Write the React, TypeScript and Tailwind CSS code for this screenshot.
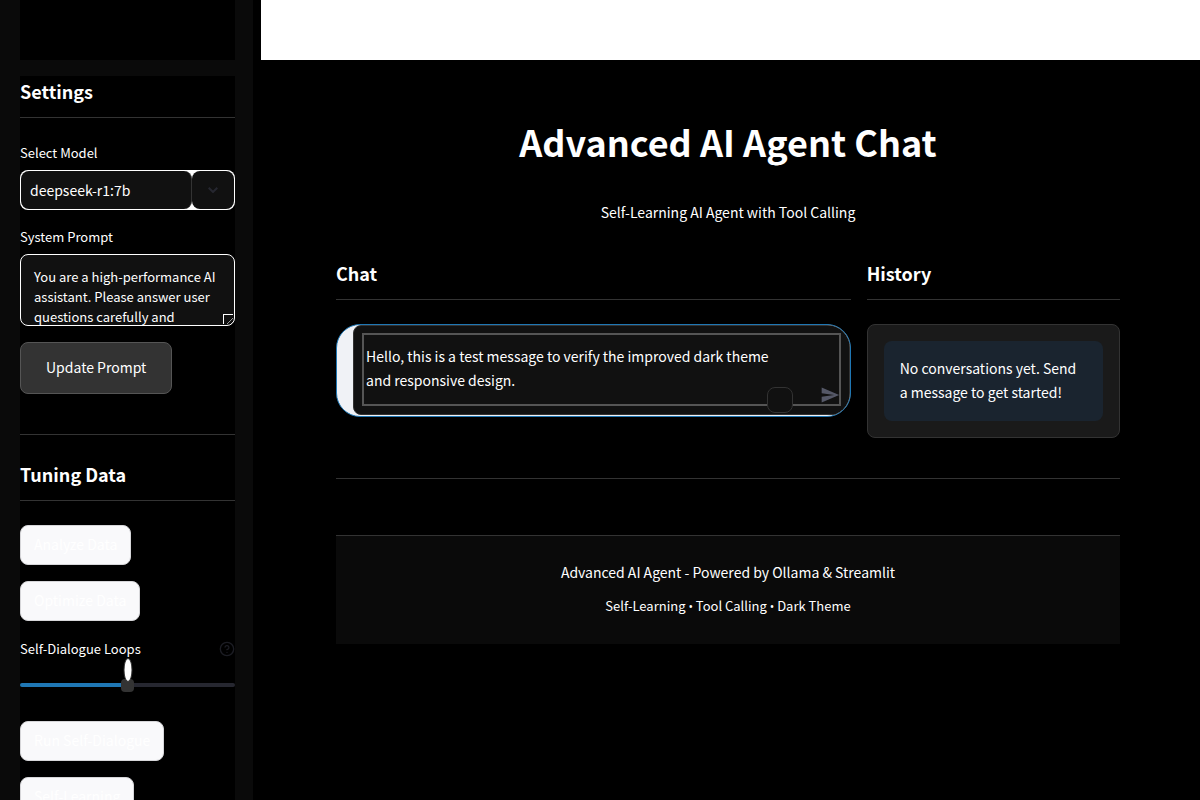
import { useState } from "react";
import type { ReactNode } from "react";

function SectionTitle({ children }: { children: ReactNode }) {
  return (
    <h2 className="border-b border-[#333] pb-[11px] text-[18px] leading-[30px] font-bold">
      {children}
    </h2>
  );
}

function PlainButton({ children }: { children: ReactNode }) {
  return (
    <button
      type="button"
      className="h-10 rounded-lg border border-[#d6d6d9] bg-[#f9f9fb] px-[13px] pb-0.5 text-[14px] leading-6 text-white"
    >
      {children}
    </button>
  );
}

function Bullet() {
  return <span className="font-['Open_Sans',sans-serif] text-[12px]">•</span>;
}

function Sidebar() {
  const [prompt, setPrompt] = useState(
    "You are a high-performance AI assistant. Please answer user questions carefully and accurately.",
  );
  const [loops, setLoops] = useState(5);
  const percent = ((loops - 1) / 8) * 100;

  return (
    <aside className="h-screen w-[253px] shrink-0 overflow-hidden bg-[#0a0a0a] pr-[18px] pl-5">
      <div className="mb-4 h-15 bg-black" />
      <div className="bg-black pb-10">
        <SectionTitle>Settings</SectionTitle>

        <label htmlFor="model" className="mt-6 block pt-px text-[13px] leading-5">
          Select Model
        </label>
        <div className="mt-[7px] flex h-10 overflow-hidden rounded-lg bg-white p-px">
          <select
            id="model"
            className="min-w-0 flex-1 appearance-none rounded-lg border-r border-[#333] bg-[#111] px-[9px] text-[14px] leading-6"
          >
            <option>deepseek-r1:7b</option>
          </select>
          <span
            aria-hidden="true"
            className="flex w-[42px] items-center justify-center rounded-lg bg-[#111] text-[#262730]"
          >
            <svg viewBox="0 0 10 6" className="h-1.5 w-2.5" fill="none" stroke="currentColor" strokeWidth="2">
              <path d="M0.7 0.7 5 5 9.3 0.7" />
            </svg>
          </span>
        </div>

        <label htmlFor="prompt" className="mt-4 block pt-px text-[13px] leading-5">
          System Prompt
        </label>
        <div className="relative mt-[7px]">
          <textarea
            id="prompt"
            value={prompt}
            onChange={(e) => setPrompt(e.target.value)}
            className="block h-18 w-full resize-y overflow-hidden rounded-lg border border-white bg-[#111] px-[13px] pt-3 text-[13px] leading-5"
          />
          <span
            aria-hidden="true"
            className="pointer-events-none absolute right-0.5 bottom-0.5 size-2.5 border-t border-l border-white"
          />
        </div>

        <button
          type="button"
          className="mt-4 h-13 rounded-lg border border-[#555] bg-[#333] px-[25px] pb-0.5 text-[14px] leading-6"
        >
          Update Prompt
        </button>

        <hr className="mt-10 mb-6 border-[#333]" />
        <SectionTitle>Tuning Data</SectionTitle>

        <div className="mt-6 flex flex-col items-start gap-4">
          <PlainButton>Analyze Data</PlainButton>
          <PlainButton>Optimize Data</PlainButton>

          <div className="w-full">
            <div className="flex h-6 items-center justify-between">
              <label htmlFor="loops" className="text-[13px] leading-5">
                Self-Dialogue Loops
              </label>
              <svg
                viewBox="0 0 24 24"
                className="size-4 text-[#1c1d24]"
                fill="none"
                stroke="currentColor"
                strokeWidth="2"
                strokeLinecap="round"
                strokeLinejoin="round"
              >
                <circle cx="12" cy="12" r="10" />
                <path d="M9.09 9a3 3 0 0 1 5.83 1c0 2-3 3-3 3M12 17h.01" />
              </svg>
            </div>
            <div className="relative flex h-11 items-center pt-1">
              <input
                id="loops"
                type="range"
                min={1}
                max={9}
                value={loops}
                onChange={(e) => setLoops(Number(e.target.value))}
                className="h-1 w-full appearance-none rounded-full [&::-webkit-slider-thumb]:size-[13px] [&::-webkit-slider-thumb]:appearance-none [&::-webkit-slider-thumb]:rounded [&::-webkit-slider-thumb]:bg-[#333]"
                style={{
                  background: `linear-gradient(to right, #1f77b4 ${percent}%, #262730 ${percent}%)`,
                }}
              />
              <output
                htmlFor="loops"
                className="absolute -top-[3px] h-6 w-[9px] -translate-x-1/2 rounded-[50%] border border-[#333] bg-white"
                style={{ left: `${percent}%` }}
              />
            </div>
          </div>

          <PlainButton>Run Self-Dialogue</PlainButton>
          <PlainButton>Self-Learning</PlainButton>
        </div>
      </div>
    </aside>
  );
}

function ChatBox() {
  const [message, setMessage] = useState(
    "Hello, this is a test message to verify the improved dark theme and responsive design.",
  );
  return (
    <form
      onSubmit={(e) => e.preventDefault()}
      className="mt-6 overflow-hidden rounded-3xl border border-[#1f77b4] bg-[#f0f2f6] pb-px pl-4"
    >
      <div className="relative rounded-l-lg border border-[#333] bg-[#111] px-2 pt-[7px] pb-2">
        <textarea
          aria-label="Message"
          rows={2}
          value={message}
          onChange={(e) => setMessage(e.target.value)}
          className="block h-[73px] w-full resize-none overflow-hidden border-2 border-[#555] py-[9px] pr-12 pl-0.5 text-[14px] leading-6"
        />
        <span
          aria-hidden="true"
          className="absolute right-14 bottom-px size-[26px] rounded-lg border border-[#333] bg-[#111]"
        />
        <button
          type="submit"
          aria-label="Send message"
          className="absolute right-[9px] bottom-[9px] text-[#555867]"
        >
          <svg viewBox="0 0 24 24" className="size-5" fill="currentColor">
            <path d="M2.01 21 23 12 2.01 3 2 10l15 2-15 2z" />
          </svg>
        </button>
      </div>
    </form>
  );
}

export default function App() {
  return (
    <div className="flex h-screen overflow-hidden bg-black font-['Noto_Sans_CJK_SC',sans-serif] text-white">
      <Sidebar />
      <main className="min-w-0 flex-1">
        <header className="ml-2 h-15 bg-white" />
        <div className="pt-[57px] pr-20 pl-[83px]">
          <h1 className="text-center text-[36px] leading-12 font-bold">
            Advanced AI Agent Chat
          </h1>
          <p className="mt-[35px] text-center text-[14px] leading-6">
            Self-Learning AI Agent with Tool Calling
          </p>

          <div className="mt-[34px] flex gap-4">
            <section className="min-w-0 flex-[1_1_calc(66.67%-16px)]">
              <SectionTitle>Chat</SectionTitle>
              <ChatBox />
            </section>
            <section className="min-w-0 flex-[1_1_calc(33.33%-16px)]">
              <SectionTitle>History</SectionTitle>
              <div className="mt-6 rounded-lg border border-[#333] bg-[#1a1a1a] p-4">
                <p className="rounded-lg bg-[#1a242f] px-4 pt-[15px] pb-[17px] text-[14px] leading-6">
                  No conversations yet. Send a message to get started!
                </p>
              </div>
            </section>
          </div>

          <hr className="mt-10 border-[#333]" />

          <footer className="mt-14 border-t border-[#333] bg-[#0a0a0a] px-4 pt-6 pb-[27px] text-center">
            <p className="text-[14px] leading-6">
              Advanced AI Agent - Powered by Ollama &amp; Streamlit
            </p>
            <p className="mt-3 text-[13px] leading-5">
              Self-Learning <Bullet /> Tool Calling <Bullet /> Dark Theme
            </p>
          </footer>
        </div>
      </main>
    </div>
  );
}
